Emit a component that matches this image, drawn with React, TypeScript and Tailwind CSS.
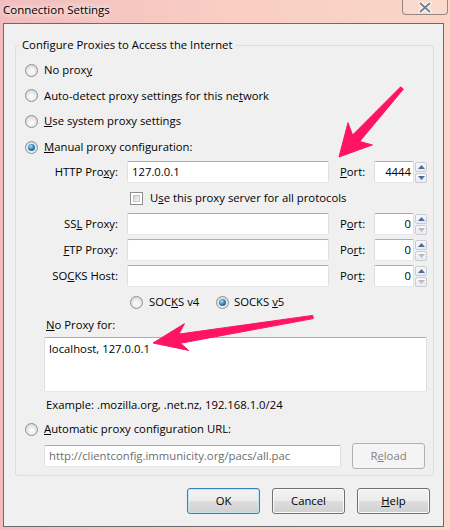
import React from "react";

type Pt = [number, number];

// build an arrow polygon in (along, across) coordinates from tail to tip
function arrowPoints(tail: Pt, tip: Pt, shape: Pt[]): string {
  const dx = tip[0] - tail[0];
  const dy = tip[1] - tail[1];
  const len = Math.hypot(dx, dy);
  const ux = dx / len;
  const uy = dy / len;
  return shape
    .map(([a, p]) => {
      const along = a < 0 ? len + a : a;
      return `${(tail[0] + ux * along - uy * p).toFixed(1)},${(tail[1] + uy * along + ux * p).toFixed(1)}`;
    })
    .join(" ");
}

function Radio({ checked = false }: { checked?: boolean }) {
  return (
    <span className="flex h-[13px] w-[13px] shrink-0 items-center justify-center rounded-full border border-[#8e8f8f] bg-[radial-gradient(circle_at_50%_60%,#fbfbfb_15%,#e6e6e6_55%,#c8c8c8_100%)]">
      {checked ? (
        <span className="h-[7px] w-[7px] rounded-full bg-[radial-gradient(circle_at_40%_35%,#b4e4fa_0%,#2f86c4_45%,#0c4878_100%)]" />
      ) : null}
    </span>
  );
}

function Checkbox() {
  return (
    <span className="flex h-[13px] w-[13px] shrink-0 border border-[#8e8f8f] bg-white p-[2px]">
      <span className="h-full w-full border border-[#c3c7cc] bg-gradient-to-br from-[#cdd1d6] to-[#f8f8f8]" />
    </span>
  );
}

function Field({ className = "", children }: { className?: string; children?: React.ReactNode }) {
  return (
    <div
      className={`flex h-[22px] items-center rounded-[2px] border border-[#abadb3] border-r-[#dbdfe6] border-b-[#e3e9ef] border-l-[#dbdfe6] bg-white ${className}`}
    >
      {children}
    </div>
  );
}

function Arrow({ up, enabled }: { up: boolean; enabled: boolean }) {
  return (
    <div className="flex flex-1 items-center justify-center rounded-[2px] border border-[#c9ccd1] bg-gradient-to-b from-[#f7f8f9] to-[#e9ebee]">
      <svg width="7" height="4" viewBox="0 0 7 4">
        <path d={up ? "M0 4 L3.5 0 L7 4Z" : "M0 0 L3.5 4 L7 0Z"} fill={enabled ? "#4c6a9c" : "#b9bcc1"} />
      </svg>
    </div>
  );
}

function Port({ value, downEnabled }: { value: string; downEnabled: boolean }) {
  return (
    <div className="flex items-center">
      <Field className="w-[40px] justify-end pr-[2px]">{value}</Field>
      <div className="ml-px flex h-[21px] w-[12px] flex-col gap-px">
        <Arrow up enabled />
        <Arrow up={false} enabled={downEnabled} />
      </div>
    </div>
  );
}

function ProxyRow({
  label,
  port,
  value,
  portValue,
  downEnabled,
  className = "mt-[4px]",
}: {
  label: React.ReactNode;
  port: React.ReactNode;
  value?: string;
  portValue: string;
  downEnabled: boolean;
  className?: string;
}) {
  return (
    <div className={`flex h-[22px] items-center ${className}`}>
      <span className="w-[102px] text-right">{label}</span>
      <Field className="ml-[9px] w-[202px] px-[4px]">{value}</Field>
      <span className="ml-[11px] w-[34px]">{port}</span>
      <Port value={portValue} downEnabled={downEnabled} />
    </div>
  );
}

function RadioRow({ checked, h, children }: { checked?: boolean; h: string; children: React.ReactNode }) {
  return (
    <div className={`flex items-center gap-[6px] pl-[9px] ${h}`}>
      <Radio checked={checked} />
      <span>{children}</span>
    </div>
  );
}

function Button({ children, primary, disabled, className = "" }: { children: React.ReactNode; primary?: boolean; disabled?: boolean; className?: string }) {
  const base = "flex h-[26px] w-[73px] items-center justify-center rounded-[3px] border";
  if (disabled) {
    return <div className={`${base} border-[#adb2b5] bg-[#f4f4f4] text-[#838383] ${className}`}>{children}</div>;
  }
  return (
    <div
      className={`${base} ${primary ? "border-[#3c7fb1] shadow-[inset_0_0_0_1px_#c4e5f6]" : "border-[#707070] shadow-[inset_0_0_0_1px_#fbfbfb]"} bg-[linear-gradient(#f3f3f3_0%,#ebebeb_50%,#dddddd_51%,#d0d0d0_100%)] ${className}`}
    >
      {children}
    </div>
  );
}

export default function App() {
  const arrow1 = arrowPoints([402, 88], [339, 157], [
    [0, -1.8],
    [68, -4.8],
    [62, -16.5],
    [-0.01, 0],
    [62, 16.5],
    [68, 4.8],
    [0, 1.8],
  ]);
  const arrow2 = arrowPoints([313, 317], [153, 343], [
    [0, -1.6],
    [135, -4.6],
    [128, -13],
    [-0.01, 0],
    [128, 14],
    [135, 4.6],
    [0, 1.6],
  ]);

  return (
    <div className="relative h-[530px] w-[450px] overflow-hidden bg-gradient-to-r from-[#f2bcbc] via-[#f9cec3] to-[#fad6c8] font-['Open_Sans','Noto_Sans',sans-serif] text-[11.3px] leading-[16px] text-black">
      <div className="flex h-[23px] justify-between pr-[2px] pl-[3px]">
        <span className="pt-[2px] text-[11.5px] [text-shadow:0_0_6px_#fff,0_0_10px_#fff]">Connection Settings</span>
        <div className="flex h-[15px] w-[46px] items-center justify-center rounded-b-[4px] border border-t-0 border-[#9a8683] bg-[#fbe1d6]/40">
          <svg width="14" height="11" viewBox="0 0 14 11">
            <path d="M2.5 1.5 L11.5 9.5 M11.5 1.5 L2.5 9.5" stroke="#ffffff" strokeWidth="4.2" strokeLinecap="round" />
            <path d="M2.5 1.5 L11.5 9.5 M11.5 1.5 L2.5 9.5" stroke="#77808c" strokeWidth="2" strokeLinecap="round" />
          </svg>
        </div>
      </div>

      <div className="ml-[3px] flex h-[504px] w-[441px] flex-col border border-[#6b6b6b] bg-[#f0f0f0]">
        <fieldset className="mt-[13px] ml-[11px] w-[419px] rounded-[3px] border border-[#d5dfe5] pb-[6px]">
          <legend className="ml-[3px] px-[3px] leading-[16px]">Configure Proxies to Access the Internet</legend>
          <div className="flex flex-col pt-[4px]">
            <RadioRow h="h-[26px]">
              No prox<u>y</u>
            </RadioRow>
            <RadioRow h="h-[25px]">
              Auto-detect proxy settings for this ne<u>t</u>work
            </RadioRow>
            <RadioRow h="h-[26px]">
              <u>U</u>se system proxy settings
            </RadioRow>
            <RadioRow h="h-[26px]" checked>
              <u>M</u>anual proxy configuration:
            </RadioRow>

            <ProxyRow
              className="mt-[1px]"
              label={<>HTTP Pro<u>x</u>y:</>}
              port={<><u>P</u>ort:</>}
              value="127.0.0.1"
              portValue="4444"
              downEnabled
            />
            <div className="mt-[4px] flex h-[22px] items-center gap-[7px] pl-[114px]">
              <Checkbox />
              <span>
                U<u>s</u>e this proxy server for all protocols
              </span>
            </div>
            <ProxyRow label={<>SS<u>L</u> Proxy:</>} port={<>P<u>o</u>rt:</>} portValue="0" downEnabled={false} />
            <ProxyRow label={<><u>F</u>TP Proxy:</>} port={<>Po<u>r</u>t:</>} portValue="0" downEnabled={false} />
            <ProxyRow label={<>SO<u>C</u>KS Host:</>} port={<>Por<u>t</u>:</>} portValue="0" downEnabled={false} />

            <div className="mt-[4px] flex h-[22px] items-center pl-[114px]">
              <div className="flex w-[86px] items-center gap-[6px]">
                <Radio />
                <span>
                  SOC<u>K</u>S v4
                </span>
              </div>
              <div className="flex items-center gap-[5px]">
                <Radio checked />
                <span>
                  SOCKS <u>v</u>5
                </span>
              </div>
            </div>

            <div className="mt-[4px] flex h-[16px] items-center pl-[30px]">
              <span>
                <u>N</u>o Proxy for:
              </span>
            </div>
            <div className="mt-[4px] ml-[28px] h-[55px] w-[383px] rounded-[2px] border border-[#abadb3] border-r-[#dbdfe6] border-b-[#e3e9ef] border-l-[#dbdfe6] bg-white px-[4px] pt-[3px]">
              localhost, 127.0.0.1
            </div>
            <div className="mt-[5px] flex h-[16px] items-center pl-[30px]">
              Example: .mozilla.org, .net.nz, 192.168.1.0/24
            </div>

            <RadioRow h="mt-[8px] h-[16px]">
              <u>A</u>utomatic proxy configuration URL:
            </RadioRow>
            <div className="mt-[6px] flex h-[26px] items-center pl-[28px]">
              <Field className="h-[21px] w-[297px] px-[4px] text-[#6d6d6d]">http://clientconfig.immunicity.org/pacs/all.pac</Field>
              <Button disabled className="ml-[11px]">
                R<u>e</u>load
              </Button>
            </div>
          </div>
        </fieldset>

        <div className="mt-[12px] flex justify-end gap-[12px] pr-[13px]">
          <Button primary>OK</Button>
          <Button>Cancel</Button>
          <Button>
            <u>H</u>elp
          </Button>
        </div>
      </div>

      <svg className="pointer-events-none absolute inset-0" width="450" height="530" viewBox="0 0 450 530">
        <polygon points={arrow1} fill="#ff1463" stroke="#ff1463" strokeWidth="1" strokeLinejoin="round" />
        <polygon points={arrow2} fill="#ff1463" stroke="#ff1463" strokeWidth="1" strokeLinejoin="round" />
      </svg>
    </div>
  );
}
